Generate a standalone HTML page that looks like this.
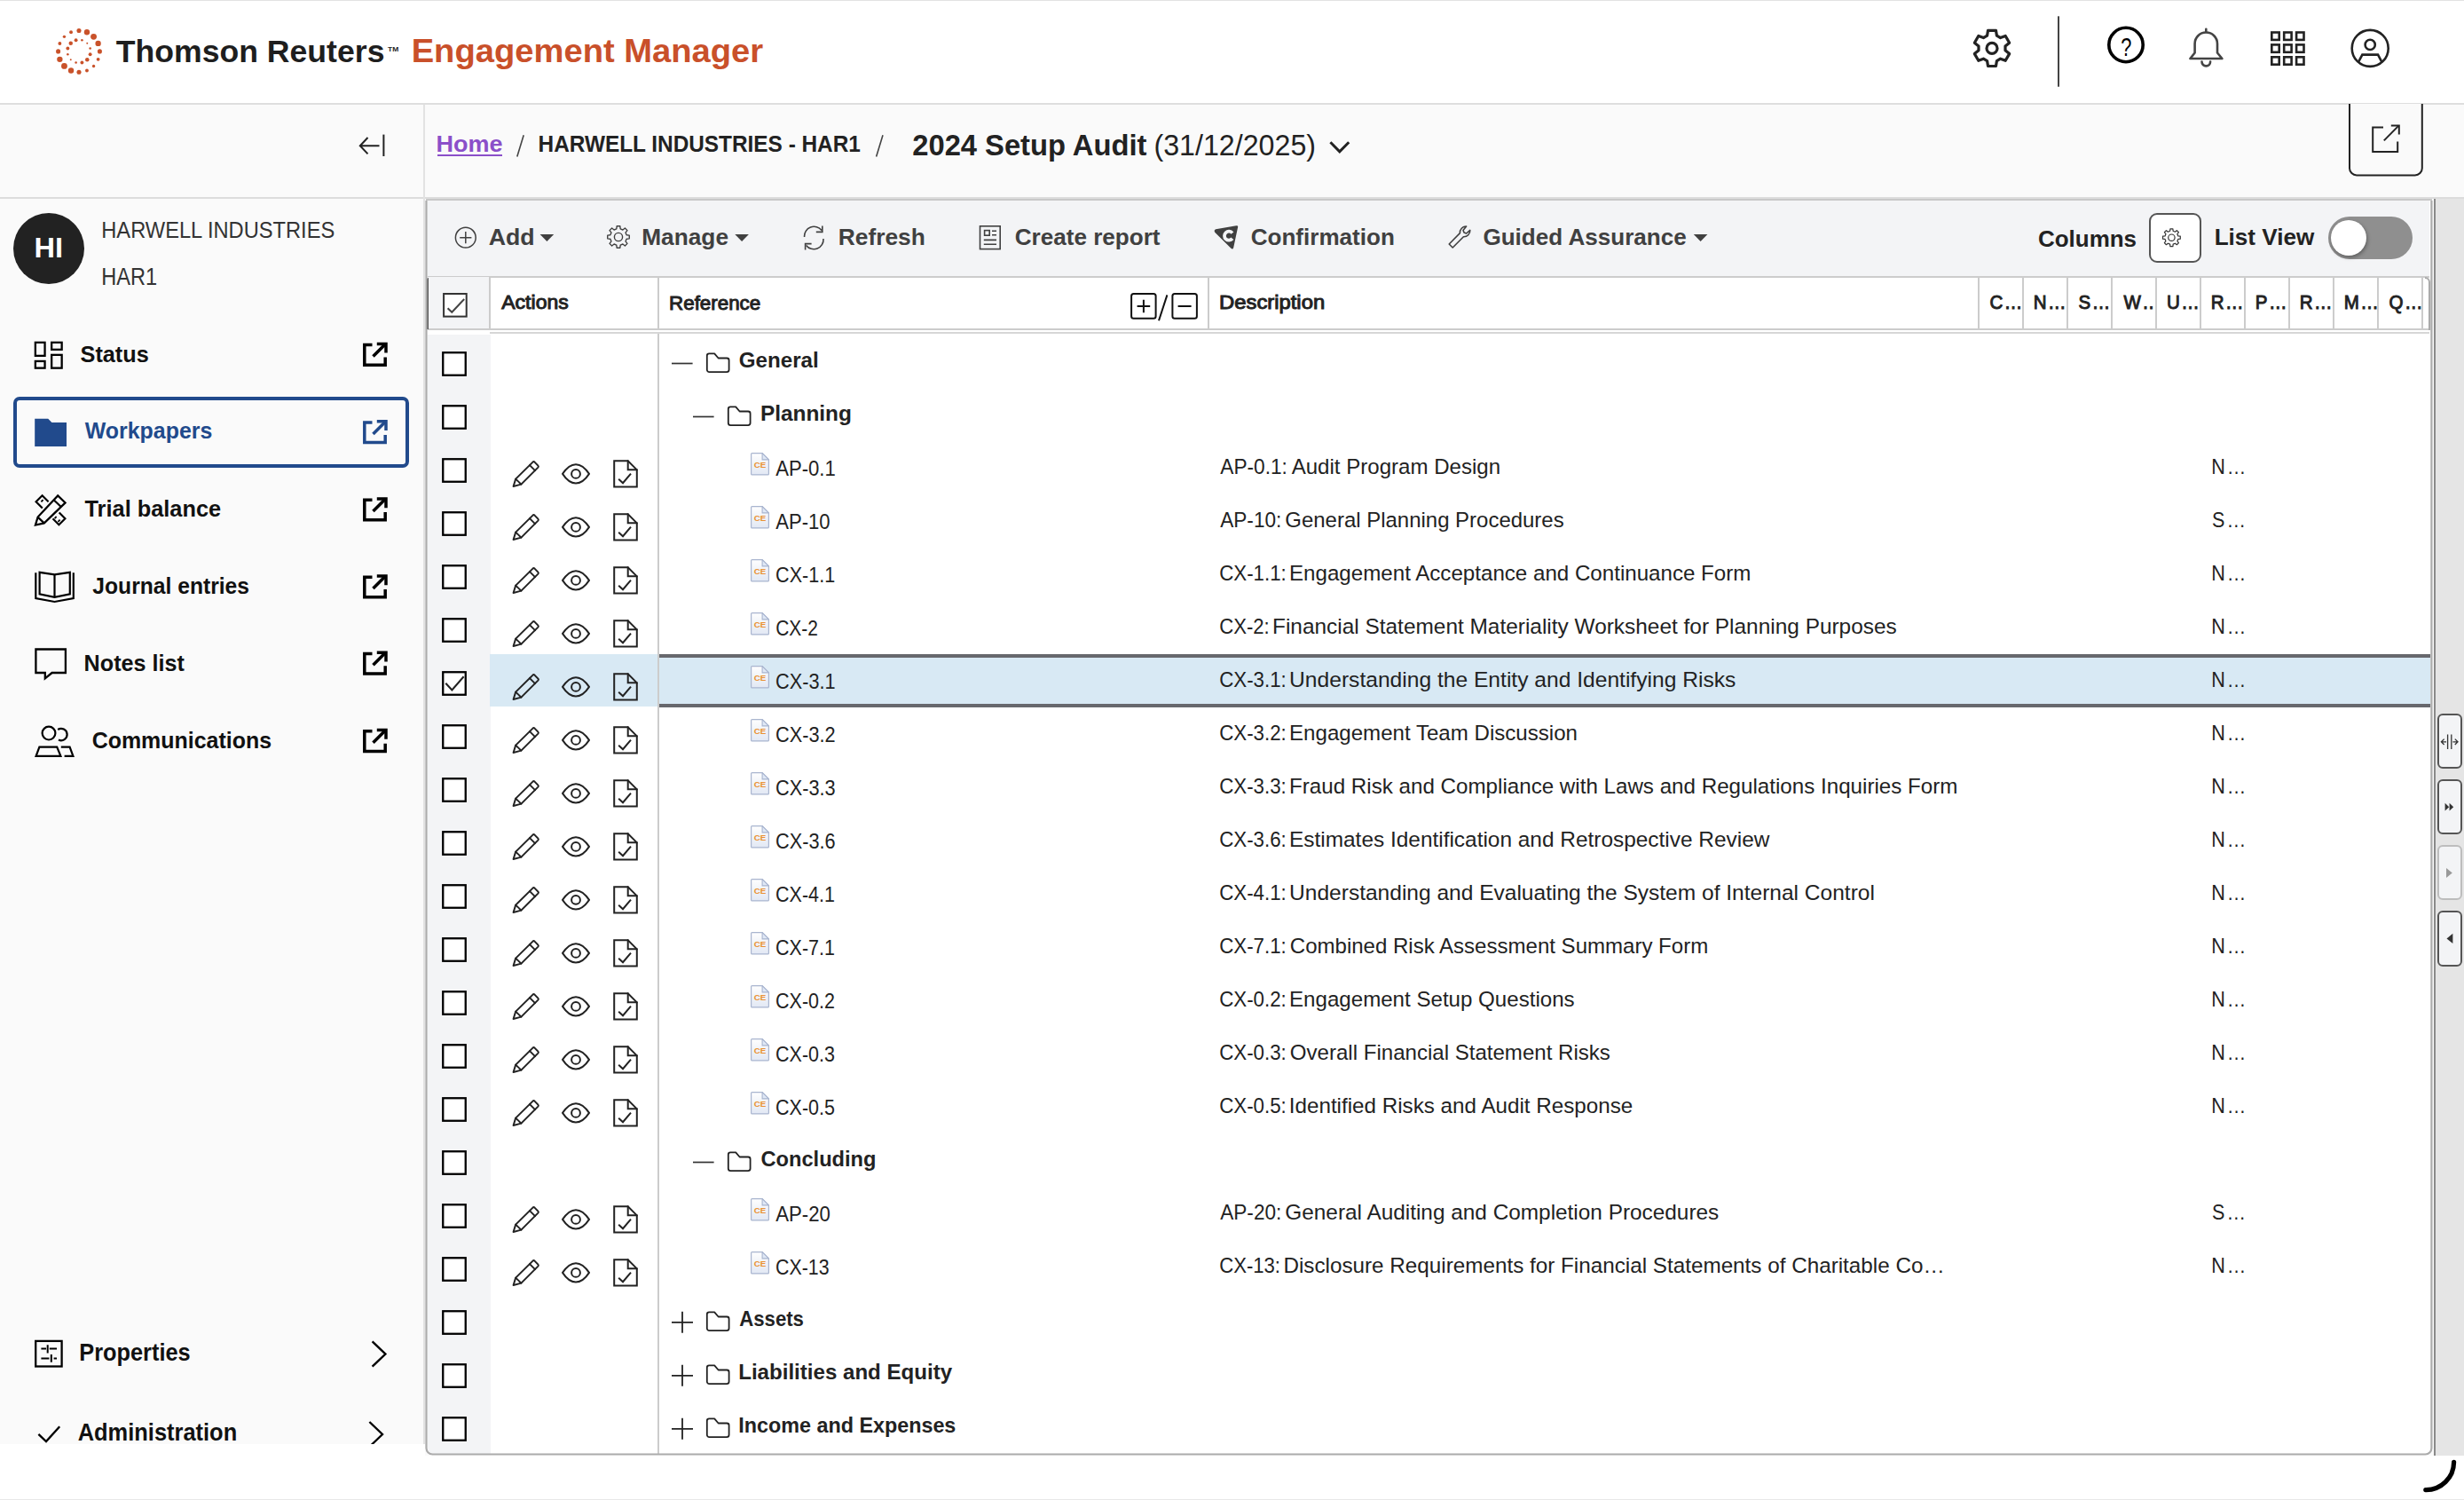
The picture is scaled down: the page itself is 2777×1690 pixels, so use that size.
<!DOCTYPE html>
<html><head><meta charset="utf-8"><title>Engagement Manager</title><style>
html,body{margin:0;padding:0}
body{width:2777px;height:1690px;overflow:hidden;background:#fff;position:relative;font-family:"Liberation Sans",sans-serif;color:#222}
.t{position:absolute;white-space:nowrap;line-height:1;transform-origin:0 0}
.bx{position:absolute;box-sizing:content-box}
.hdr{position:absolute;left:0;top:0;width:2777px;height:115px;background:#fff;border-top:1px solid #e2e2e2;border-bottom:2px solid #dedede}
.sub{position:absolute;left:0;top:118px;width:2777px;height:104px;background:#fafafa;border-bottom:2px solid #dcdcdc}
.side{position:absolute;left:0;top:224px;width:477px;height:1403px;border-right:2px solid #e2e2e2}
.sdiv{position:absolute;left:477px;top:118px;width:2px;height:106px;background:#e2e2e2}
.side{background:#fafafa}
.sub{z-index:0}
.strip{position:absolute;left:2743px;top:224px;width:34px;height:1416px;background:#e5e5e5;border-left:2px solid #8a8a8a;box-sizing:border-box}
.panel{position:absolute;left:480px;top:224px;width:2261px;height:1415px;border-top:2px solid #c8c8c8;box-sizing:border-box;border-radius:0 0 8px 8px;background:#fff}
.tbar{position:absolute;left:482px;top:226px;width:2256px;height:85px;background:#f3f4f6;border-bottom:2px solid #ccc}
.thead{position:absolute;left:482px;top:370px;width:2256px;height:2px;background:#ccc}
.thead:after{content:"";position:absolute;left:70px;top:4px;width:2186px;height:2px;background:#d6d6d6}
svg.ov{position:absolute;left:0;top:0}
</style></head><body>
<div class="bx" style="left:0;top:224px;width:2777px;height:1416px;background:#fafafa"></div>
<div class="hdr"></div>
<span class="t" style="left:130px;top:41px;font-size:35.76px;transform:translateX(0.70px) scaleX(0.9962);font-weight:bold;color:#1e1e1e;">Thomson Reuters</span>
<span class="t" style="left:437px;top:52px;font-size:7.56px;transform:translateX(0.10px) scaleX(1.1245);font-weight:bold;color:#1e1e1e;">TM</span>
<span class="t" style="left:463px;top:40px;font-size:36.05px;transform:translateX(0.65px) scaleX(1.0586);font-weight:bold;color:#c9502a;">Engagement Manager</span>
<div class="sub"></div>
<span class="t" style="left:491px;top:150px;font-size:25.58px;transform:translateX(0.39px) scaleX(1.0556);font-weight:bold;color:#8b4fc9;">Home</span>
<div class="bx" style="left:493px;top:174px;width:72.5px;height:2px;background:#8b4fc9"></div>
<span class="t" style="left:606px;top:150px;font-size:25.58px;transform:translateX(0.57px) scaleX(0.9527);font-weight:bold;">HARWELL INDUSTRIES - HAR1</span>
<span class="t" style="left:1028px;top:148px;font-size:32.7px;transform:translateX(0.27px) scaleX(1.0006);font-weight:bold;">2024 Setup Audit</span>
<span class="t" style="left:1300px;top:148px;font-size:32.7px;transform:translateX(0.50px) scaleX(0.9845);">(31/12/2025)</span>
<div class="side"></div><div class="sdiv"></div>
<div class="bx" style="left:15px;top:240px;width:80px;height:80px;border-radius:40px;background:#222"></div>
<span class="t" style="left:38px;top:264px;font-size:30.52px;transform:translateX(0.62px) scaleX(1.0662);font-weight:bold;color:#fff;">HI</span>
<span class="t" style="left:114px;top:246px;font-size:26.16px;transform:translateX(0.26px) scaleX(0.9048);color:#333;">HARWELL INDUSTRIES</span>
<span class="t" style="left:114px;top:299px;font-size:26.74px;transform:translateX(0.27px) scaleX(0.8816);color:#333;">HAR1</span>
<span class="t" style="left:90px;top:386px;font-size:26.6px;transform:translateX(0.57px) scaleX(0.9493);font-weight:bold;color:#111;">Status</span>
<div class="bx" style="left:15px;top:446.7px;width:438px;height:72px;border:4px solid #214a8c;border-radius:7px"></div>
<span class="t" style="left:95px;top:472px;font-size:26.16px;transform:translateX(0.78px) scaleX(0.9525);font-weight:bold;color:#214a8c;">Workpapers</span>
<span class="t" style="left:95px;top:560px;font-size:26.6px;transform:translateX(0.52px) scaleX(0.9536);font-weight:bold;color:#111;">Trial balance</span>
<span class="t" style="left:104px;top:647px;font-size:26.6px;transform:translateX(0.33px) scaleX(0.9267);font-weight:bold;color:#111;">Journal entries</span>
<span class="t" style="left:94px;top:734px;font-size:26.6px;transform:translateX(0.62px) scaleX(0.9456);font-weight:bold;color:#111;">Notes list</span>
<span class="t" style="left:103px;top:821px;font-size:26.6px;transform:translateX(0.68px) scaleX(0.9379);font-weight:bold;color:#111;">Communications</span>
<span class="t" style="left:89px;top:1511px;font-size:26.89px;transform:translateX(0.30px) scaleX(0.9428);font-weight:bold;color:#111;">Properties</span>
<span class="t" style="left:87px;top:1601px;font-size:26.74px;transform:translateX(0.67px) scaleX(0.9516);font-weight:bold;color:#111;">Administration</span>
<div class="bx" style="left:0;top:1627px;width:479px;height:63px;background:#fff"></div>
<div class="strip"></div>
<div class="panel"></div>
<div class="tbar"></div>
<span class="t" style="left:550px;top:255px;font-size:25.8px;transform:translateX(0.63px) scaleX(1.0353);font-weight:bold;color:#404040;">Add</span>
<span class="t" style="left:723px;top:255px;font-size:25.8px;transform:translateX(0.24px) scaleX(1.0178);font-weight:bold;color:#404040;">Manage</span>
<span class="t" style="left:944px;top:255px;font-size:25.8px;transform:translateX(0.84px) scaleX(1.0201);font-weight:bold;color:#404040;">Refresh</span>
<span class="t" style="left:1143px;top:255px;font-size:25.8px;transform:translateX(0.73px) scaleX(1.0110);font-weight:bold;color:#404040;">Create report</span>
<span class="t" style="left:1409px;top:255px;font-size:25.8px;transform:translateX(0.73px) scaleX(1.0099);font-weight:bold;color:#404040;">Confirmation</span>
<span class="t" style="left:1671px;top:255px;font-size:25.8px;transform:translateX(0.43px) scaleX(1.0100);font-weight:bold;color:#404040;">Guided Assurance</span>
<span class="t" style="left:2296px;top:257px;font-size:25.8px;transform:translateX(0.93px) scaleX(1.0070);font-weight:bold;">Columns</span>
<div class="bx" style="left:2422px;top:240px;width:55px;height:52px;border:2px solid #555;border-radius:9px;background:#fff"></div>
<span class="t" style="left:2495px;top:255px;font-size:25.8px;transform:translateX(0.65px) scaleX(1.0120);font-weight:bold;">List View</span>
<div class="bx" style="left:2623.5px;top:244px;width:95.5px;height:48px;border-radius:24px;background:#8f8f8f"></div>
<div class="bx" style="left:2627px;top:248px;width:40px;height:40px;border-radius:20px;background:#fff;box-shadow:1px 2px 4px rgba(0,0,0,.35)"></div>
<div class="thead"></div>
<div class="bx" style="left:482px;top:312px;width:69px;height:58px;background:#f3f4f6"></div>
<div class="bx" style="left:551px;top:312px;width:2px;height:58px;background:#ccc"></div>
<div class="bx" style="left:741px;top:312px;width:2px;height:58px;background:#ccc"></div>
<div class="bx" style="left:1361px;top:312px;width:2px;height:58px;background:#ccc"></div>
<div class="bx" style="left:2229px;top:312px;width:2px;height:58px;background:#ccc"></div>
<div class="bx" style="left:2279px;top:312px;width:2px;height:58px;background:#ccc"></div>
<div class="bx" style="left:2329px;top:312px;width:2px;height:58px;background:#ccc"></div>
<div class="bx" style="left:2379px;top:312px;width:2px;height:58px;background:#ccc"></div>
<div class="bx" style="left:2429px;top:312px;width:2px;height:58px;background:#ccc"></div>
<div class="bx" style="left:2479px;top:312px;width:2px;height:58px;background:#ccc"></div>
<div class="bx" style="left:2529px;top:312px;width:2px;height:58px;background:#ccc"></div>
<div class="bx" style="left:2579px;top:312px;width:2px;height:58px;background:#ccc"></div>
<div class="bx" style="left:2629px;top:312px;width:2px;height:58px;background:#ccc"></div>
<div class="bx" style="left:2679px;top:312px;width:2px;height:58px;background:#ccc"></div>
<div class="bx" style="left:2729px;top:312px;width:2px;height:58px;background:#ccc"></div>
<div class="bx" style="left:480.5px;top:313px;width:2.2px;height:58px;background:#5a5a5a;border-radius:3px 0 0 0"></div>
<div class="bx" style="left:2733px;top:312px;width:6px;height:60px;border:2px solid #aaa;border-left:0;border-bottom:0;border-radius:0 6px 0 0;box-sizing:border-box"></div>
<span class="t" style="left:565px;top:329px;font-size:22.67px;transform:translateX(0.26px) scaleX(1.0159);-webkit-text-stroke:1px #222;">Actions</span>
<span class="t" style="left:754px;top:330px;font-size:22.67px;transform:translateX(0.07px) scaleX(0.9866);-webkit-text-stroke:1px #222;">Reference</span>
<span class="t" style="left:1374px;top:329px;font-size:22.67px;transform:translateX(0.05px) scaleX(1.0509);-webkit-text-stroke:1px #222;">Description</span>
<div class="bx" style="left:2242px;top:322px;width:36.5px;height:40px;overflow:hidden"><span class="t" style="left:0px;top:7px;font-size:22.67px;transform:translateX(0.46px) scaleX(0.9050);letter-spacing:1.6px;-webkit-text-stroke:1px #222;">C…</span></div>
<div class="bx" style="left:2292px;top:322px;width:36.5px;height:40px;overflow:hidden"><span class="t" style="left:-1px;top:7px;font-size:22.67px;transform:translateX(0.82px) scaleX(0.9050);letter-spacing:1.6px;-webkit-text-stroke:1px #222;">N…</span></div>
<div class="bx" style="left:2342px;top:322px;width:36.5px;height:40px;overflow:hidden"><span class="t" style="left:0px;top:7px;font-size:22.67px;transform:translateX(0.57px) scaleX(0.9050);letter-spacing:1.6px;-webkit-text-stroke:1px #222;">S…</span></div>
<div class="bx" style="left:2392px;top:322px;width:36.5px;height:40px;overflow:hidden"><span class="t" style="left:1px;top:7px;font-size:22.67px;transform:translateX(0.41px) scaleX(0.9050);letter-spacing:1.6px;-webkit-text-stroke:1px #222;">W…</span></div>
<div class="bx" style="left:2442px;top:322px;width:36.5px;height:40px;overflow:hidden"><span class="t" style="left:-1px;top:7px;font-size:22.67px;transform:translateX(0.92px) scaleX(0.9050);letter-spacing:1.6px;-webkit-text-stroke:1px #222;">U…</span></div>
<div class="bx" style="left:2492px;top:322px;width:36.5px;height:40px;overflow:hidden"><span class="t" style="left:-1px;top:7px;font-size:22.67px;transform:translateX(0.82px) scaleX(0.9050);letter-spacing:1.6px;-webkit-text-stroke:1px #222;">R…</span></div>
<div class="bx" style="left:2542px;top:322px;width:36.5px;height:40px;overflow:hidden"><span class="t" style="left:-1px;top:7px;font-size:22.67px;transform:translateX(0.82px) scaleX(0.9050);letter-spacing:1.6px;-webkit-text-stroke:1px #222;">P…</span></div>
<div class="bx" style="left:2592px;top:322px;width:36.5px;height:40px;overflow:hidden"><span class="t" style="left:-1px;top:7px;font-size:22.67px;transform:translateX(0.82px) scaleX(0.9050);letter-spacing:1.6px;-webkit-text-stroke:1px #222;">R…</span></div>
<div class="bx" style="left:2642px;top:322px;width:36.5px;height:40px;overflow:hidden"><span class="t" style="left:-1px;top:7px;font-size:22.67px;transform:translateX(0.82px) scaleX(0.9050);letter-spacing:1.6px;-webkit-text-stroke:1px #222;">M…</span></div>
<div class="bx" style="left:2692px;top:322px;width:36.5px;height:40px;overflow:hidden"><span class="t" style="left:0px;top:7px;font-size:22.67px;transform:translateX(0.53px) scaleX(0.9050);letter-spacing:1.6px;-webkit-text-stroke:1px #222;">Q…</span></div>
<div class="bx" style="left:481.5px;top:376.5px;width:71.4px;height:1261px;background:#f3f4f6;border-radius:0 0 0 7px"></div>
<div class="bx" style="left:741px;top:376px;width:2px;height:1262px;background:#ccc"></div>
<div class="bx" style="left:552px;top:737px;width:189px;height:59px;background:#d8e9f4"></div>
<div class="bx" style="left:743px;top:736.5px;width:1996px;height:52px;background:#d8e9f4;border-top:4px solid #67686d;border-bottom:4px solid #67686d"></div>
<span class="t" style="left:832px;top:394px;font-size:23.84px;transform:translateX(0.81px) scaleX(1.0130);font-weight:bold;">General</span>
<span class="t" style="left:856px;top:454px;font-size:23.84px;transform:translateX(0.89px) scaleX(1.0242);font-weight:bold;">Planning</span>
<span class="t" style="left:874px;top:517px;font-size:23.69px;transform:translateX(0.26px) scaleX(0.9323);">AP-0.1</span>
<span class="t" style="left:1375px;top:514px;font-size:23.84px;transform:translateX(0.26px) scaleX(0.9515);">AP-0.1:</span>
<span class="t" style="left:1455px;top:514px;font-size:23.84px;transform:translateX(0.65px) scaleX(1.0099);">Audit Program Design</span>
<div class="bx" style="left:2490px;top:507px;width:40.5px;height:40px;overflow:hidden"><span class="t" style="left:2px;top:7px;font-size:23.84px;transform:translateX(0.13px) scaleX(0.9050);letter-spacing:2.3px;">N…</span></div>
<span class="t" style="left:874px;top:577px;font-size:23.69px;transform:translateX(0.26px) scaleX(0.9311);">AP-10</span>
<span class="t" style="left:1375px;top:574px;font-size:23.84px;transform:translateX(0.26px) scaleX(0.9471);">AP-10:</span>
<span class="t" style="left:1448px;top:574px;font-size:23.84px;transform:translateX(0.29px) scaleX(1.0056);">General Planning Procedures</span>
<div class="bx" style="left:2490px;top:567px;width:40.5px;height:40px;overflow:hidden"><span class="t" style="left:2px;top:7px;font-size:23.84px;transform:translateX(0.92px) scaleX(0.9050);letter-spacing:2.3px;">S…</span></div>
<span class="t" style="left:874px;top:637px;font-size:23.69px;transform:translateX(0.11px) scaleX(0.9093);">CX-1.1</span>
<span class="t" style="left:1374px;top:634px;font-size:23.84px;transform:translateX(0.17px) scaleX(0.9355);">CX-1.1:</span>
<span class="t" style="left:1453px;top:634px;font-size:23.84px;transform:translateX(0.02px) scaleX(1.0125);">Engagement Acceptance and Continuance Form</span>
<div class="bx" style="left:2490px;top:627px;width:40.5px;height:40px;overflow:hidden"><span class="t" style="left:2px;top:7px;font-size:23.84px;transform:translateX(0.13px) scaleX(0.9050);letter-spacing:2.3px;">N…</span></div>
<span class="t" style="left:874px;top:697px;font-size:23.69px;transform:translateX(0.14px) scaleX(0.8822);">CX-2</span>
<span class="t" style="left:1374px;top:694px;font-size:23.84px;transform:translateX(0.18px) scaleX(0.9281);">CX-2:</span>
<span class="t" style="left:1433px;top:694px;font-size:23.84px;transform:translateX(1.00px) scaleX(1.0245);">Financial Statement Materiality Worksheet for Planning Purposes</span>
<div class="bx" style="left:2490px;top:687px;width:40.5px;height:40px;overflow:hidden"><span class="t" style="left:2px;top:7px;font-size:23.84px;transform:translateX(0.13px) scaleX(0.9050);letter-spacing:2.3px;">N…</span></div>
<span class="t" style="left:874px;top:757px;font-size:23.69px;transform:translateX(0.10px) scaleX(0.9163);">CX-3.1</span>
<span class="t" style="left:1374px;top:754px;font-size:23.84px;transform:translateX(0.17px) scaleX(0.9355);">CX-3.1:</span>
<span class="t" style="left:1453px;top:754px;font-size:23.84px;transform:translateX(0.10px) scaleX(1.0323);">Understanding the Entity and Identifying Risks</span>
<div class="bx" style="left:2490px;top:747px;width:40.5px;height:40px;overflow:hidden"><span class="t" style="left:2px;top:7px;font-size:23.84px;transform:translateX(0.13px) scaleX(0.9050);letter-spacing:2.3px;">N…</span></div>
<span class="t" style="left:874px;top:817px;font-size:23.69px;transform:translateX(0.10px) scaleX(0.9167);">CX-3.2</span>
<span class="t" style="left:1374px;top:814px;font-size:23.84px;transform:translateX(0.17px) scaleX(0.9355);">CX-3.2:</span>
<span class="t" style="left:1453px;top:814px;font-size:23.84px;transform:translateX(0.02px) scaleX(1.0110);">Engagement Team Discussion</span>
<div class="bx" style="left:2490px;top:807px;width:40.5px;height:40px;overflow:hidden"><span class="t" style="left:2px;top:7px;font-size:23.84px;transform:translateX(0.13px) scaleX(0.9050);letter-spacing:2.3px;">N…</span></div>
<span class="t" style="left:874px;top:877px;font-size:23.69px;transform:translateX(0.10px) scaleX(0.9148);">CX-3.3</span>
<span class="t" style="left:1374px;top:874px;font-size:23.84px;transform:translateX(0.17px) scaleX(0.9355);">CX-3.3:</span>
<span class="t" style="left:1453px;top:874px;font-size:23.84px;transform:translateX(0.02px) scaleX(1.0140);">Fraud Risk and Compliance with Laws and Regulations Inquiries Form</span>
<div class="bx" style="left:2490px;top:867px;width:40.5px;height:40px;overflow:hidden"><span class="t" style="left:2px;top:7px;font-size:23.84px;transform:translateX(0.13px) scaleX(0.9050);letter-spacing:2.3px;">N…</span></div>
<span class="t" style="left:874px;top:937px;font-size:23.69px;transform:translateX(0.10px) scaleX(0.9148);">CX-3.6</span>
<span class="t" style="left:1374px;top:934px;font-size:23.84px;transform:translateX(0.17px) scaleX(0.9355);">CX-3.6:</span>
<span class="t" style="left:1452px;top:934px;font-size:23.84px;transform:translateX(1.00px) scaleX(1.0244);">Estimates Identification and Retrospective Review</span>
<div class="bx" style="left:2490px;top:927px;width:40.5px;height:40px;overflow:hidden"><span class="t" style="left:2px;top:7px;font-size:23.84px;transform:translateX(0.13px) scaleX(0.9050);letter-spacing:2.3px;">N…</span></div>
<span class="t" style="left:874px;top:997px;font-size:23.69px;transform:translateX(0.11px) scaleX(0.9050);">CX-4.1</span>
<span class="t" style="left:1374px;top:994px;font-size:23.84px;transform:translateX(0.17px) scaleX(0.9355);">CX-4.1:</span>
<span class="t" style="left:1453px;top:994px;font-size:23.84px;transform:translateX(0.11px) scaleX(1.0292);">Understanding and Evaluating the System of Internal Control</span>
<div class="bx" style="left:2490px;top:987px;width:40.5px;height:40px;overflow:hidden"><span class="t" style="left:2px;top:7px;font-size:23.84px;transform:translateX(0.13px) scaleX(0.9050);letter-spacing:2.3px;">N…</span></div>
<span class="t" style="left:874px;top:1057px;font-size:23.69px;transform:translateX(0.11px) scaleX(0.9050);">CX-7.1</span>
<span class="t" style="left:1374px;top:1054px;font-size:23.84px;transform:translateX(0.17px) scaleX(0.9355);">CX-7.1:</span>
<span class="t" style="left:1453px;top:1054px;font-size:23.84px;transform:translateX(0.78px) scaleX(1.0085);">Combined Risk Assessment Summary Form</span>
<div class="bx" style="left:2490px;top:1047px;width:40.5px;height:40px;overflow:hidden"><span class="t" style="left:2px;top:7px;font-size:23.84px;transform:translateX(0.13px) scaleX(0.9050);letter-spacing:2.3px;">N…</span></div>
<span class="t" style="left:874px;top:1117px;font-size:23.69px;transform:translateX(0.11px) scaleX(0.9050);">CX-0.2</span>
<span class="t" style="left:1374px;top:1114px;font-size:23.84px;transform:translateX(0.17px) scaleX(0.9355);">CX-0.2:</span>
<span class="t" style="left:1453px;top:1114px;font-size:23.84px;transform:translateX(0.02px) scaleX(1.0117);">Engagement Setup Questions</span>
<div class="bx" style="left:2490px;top:1107px;width:40.5px;height:40px;overflow:hidden"><span class="t" style="left:2px;top:7px;font-size:23.84px;transform:translateX(0.13px) scaleX(0.9050);letter-spacing:2.3px;">N…</span></div>
<span class="t" style="left:874px;top:1177px;font-size:23.69px;transform:translateX(0.11px) scaleX(0.9050);">CX-0.3</span>
<span class="t" style="left:1374px;top:1174px;font-size:23.84px;transform:translateX(0.17px) scaleX(0.9355);">CX-0.3:</span>
<span class="t" style="left:1453px;top:1174px;font-size:23.84px;transform:translateX(0.86px) scaleX(1.0096);">Overall Financial Statement Risks</span>
<div class="bx" style="left:2490px;top:1167px;width:40.5px;height:40px;overflow:hidden"><span class="t" style="left:2px;top:7px;font-size:23.84px;transform:translateX(0.13px) scaleX(0.9050);letter-spacing:2.3px;">N…</span></div>
<span class="t" style="left:874px;top:1237px;font-size:23.69px;transform:translateX(0.11px) scaleX(0.9050);">CX-0.5</span>
<span class="t" style="left:1374px;top:1234px;font-size:23.84px;transform:translateX(0.17px) scaleX(0.9355);">CX-0.5:</span>
<span class="t" style="left:1452px;top:1234px;font-size:23.84px;transform:translateX(0.77px) scaleX(1.0158);">Identified Risks and Audit Response</span>
<div class="bx" style="left:2490px;top:1227px;width:40.5px;height:40px;overflow:hidden"><span class="t" style="left:2px;top:7px;font-size:23.84px;transform:translateX(0.13px) scaleX(0.9050);letter-spacing:2.3px;">N…</span></div>
<span class="t" style="left:857px;top:1294px;font-size:23.84px;transform:translateX(0.55px) scaleX(0.9915);font-weight:bold;">Concluding</span>
<span class="t" style="left:874px;top:1357px;font-size:23.69px;transform:translateX(0.26px) scaleX(0.9357);">AP-20</span>
<span class="t" style="left:1375px;top:1354px;font-size:23.84px;transform:translateX(0.26px) scaleX(0.9471);">AP-20:</span>
<span class="t" style="left:1448px;top:1354px;font-size:23.84px;transform:translateX(0.27px) scaleX(1.0226);">General Auditing and Completion Procedures</span>
<div class="bx" style="left:2490px;top:1347px;width:40.5px;height:40px;overflow:hidden"><span class="t" style="left:2px;top:7px;font-size:23.84px;transform:translateX(0.92px) scaleX(0.9050);letter-spacing:2.3px;">S…</span></div>
<span class="t" style="left:874px;top:1417px;font-size:23.69px;transform:translateX(0.12px) scaleX(0.8997);">CX-13</span>
<span class="t" style="left:1374px;top:1414px;font-size:23.84px;transform:translateX(0.18px) scaleX(0.9282);">CX-13:</span>
<span class="t" style="left:1446px;top:1414px;font-size:23.84px;transform:translateX(0.41px) scaleX(1.0176);">Disclosure Requirements for Financial Statements of Charitable Co…</span>
<div class="bx" style="left:2490px;top:1407px;width:40.5px;height:40px;overflow:hidden"><span class="t" style="left:2px;top:7px;font-size:23.84px;transform:translateX(0.13px) scaleX(0.9050);letter-spacing:2.3px;">N…</span></div>
<span class="t" style="left:833px;top:1474px;font-size:23.84px;transform:translateX(0.25px) scaleX(0.9297);font-weight:bold;">Assets</span>
<span class="t" style="left:832px;top:1534px;font-size:23.84px;transform:translateX(0.19px) scaleX(1.0110);font-weight:bold;">Liabilities and Equity</span>
<span class="t" style="left:832px;top:1594px;font-size:23.84px;transform:translateX(0.24px) scaleX(0.9793);font-weight:bold;">Income and Expenses</span>
<div class="bx" style="left:2747.3px;top:803.6px;width:23.4px;height:58.4px;border:2px solid #555;border-radius:6px;background:#f3f4f6"></div>
<div class="bx" style="left:2747.3px;top:877.7px;width:23.4px;height:58.4px;border:2px solid #555;border-radius:6px;background:#f3f4f6"></div>
<div class="bx" style="left:2747.3px;top:952px;width:23.4px;height:58.4px;border:2px solid #bdbdbd;border-radius:6px;background:#f3f4f6"></div>
<div class="bx" style="left:2747.3px;top:1026.2px;width:23.4px;height:58.4px;border:2px solid #555;border-radius:6px;background:#f3f4f6"></div>
<svg class="ov" width="2777" height="1690" viewBox="0 0 2777 1690">
<defs><linearGradient id="cg" x1="0" y1="0" x2="0" y2="1"><stop offset="0" stop-color="#fefefe"/><stop offset="1" stop-color="#e2e8f4"/></linearGradient></defs>
<g fill="#c9522a"><circle cx="89.00" cy="34.50" r="2.55"/><circle cx="97.95" cy="36.28" r="3.17"/><circle cx="105.55" cy="41.35" r="3.42"/><circle cx="110.62" cy="48.95" r="3.17"/><circle cx="112.40" cy="57.90" r="2.55"/><circle cx="110.62" cy="66.85" r="1.93"/><circle cx="105.55" cy="74.45" r="1.68"/><circle cx="97.95" cy="79.52" r="1.93"/><circle cx="89.00" cy="81.30" r="2.55"/><circle cx="80.05" cy="79.52" r="3.17"/><circle cx="72.45" cy="74.45" r="3.42"/><circle cx="67.38" cy="66.85" r="3.17"/><circle cx="65.60" cy="57.90" r="2.55"/><circle cx="67.38" cy="48.95" r="1.93"/><circle cx="72.45" cy="41.35" r="1.68"/><circle cx="80.05" cy="36.28" r="1.93"/><circle cx="85.61" cy="45.25" r="1.94"/><circle cx="92.39" cy="45.25" r="1.31"/><circle cx="98.26" cy="48.64" r="0.99"/><circle cx="101.65" cy="54.51" r="1.31"/><circle cx="101.65" cy="61.29" r="1.94"/><circle cx="98.26" cy="67.16" r="2.25"/><circle cx="92.39" cy="70.55" r="1.94"/><circle cx="85.61" cy="70.55" r="1.30"/><circle cx="79.74" cy="67.16" r="0.99"/><circle cx="76.35" cy="61.29" r="1.30"/><circle cx="76.35" cy="54.51" r="1.94"/><circle cx="79.74" cy="48.64" r="2.25"/></g>
<path d="M2239.55 40.21 L2240.54 34.29 L2249.46 34.29 L2250.45 40.21 L2254.57 42.59 L2260.19 40.48 L2264.65 48.21 L2260.01 52.02 L2260.01 56.78 L2264.65 60.59 L2260.19 68.32 L2254.57 66.21 L2250.45 68.59 L2249.46 74.51 L2240.54 74.51 L2239.55 68.59 L2235.43 66.21 L2229.81 68.32 L2225.35 60.59 L2229.99 56.78 L2229.99 52.02 L2225.35 48.21 L2229.81 40.48 L2235.43 42.59 Z" fill="none" stroke="#222" stroke-width="3.2" stroke-linejoin="round"/><circle cx="2245" cy="54.4" r="6" fill="none" stroke="#222" stroke-width="3.2"/>
<rect x="2319" y="18.3" width="2" height="79.4" fill="#444"/>
<circle cx="2396" cy="50.5" r="19.2" fill="none" stroke="#000" stroke-width="3.6"/><text x="0" y="0" transform="translate(2396.3 62.9) scale(0.74 1)" font-family="Liberation Sans" font-size="29.5" fill="#000" text-anchor="middle">?</text>
<g fill="none" stroke="#444" stroke-width="2.6" stroke-linejoin="round" stroke-linecap="round"><path d="M2468.4 66 L2473.6 59.5 V49.2 a12.7 12.7 0 0 1 25.4 0 V59.5 L2504.4 66 Z"/><path d="M2486.3 36 V32.8"/><path d="M2481.5 69.6 a4.8 4.8 0 0 0 9.6 0"/></g>
<g fill="none" stroke="#222" stroke-width="2.6"><rect x="2560.3" y="36.5" width="8.4" height="8.4"/><rect x="2574.2" y="36.5" width="8.4" height="8.4"/><rect x="2588.1" y="36.5" width="8.4" height="8.4"/><rect x="2560.3" y="50.4" width="8.4" height="8.4"/><rect x="2574.2" y="50.4" width="8.4" height="8.4"/><rect x="2588.1" y="50.4" width="8.4" height="8.4"/><rect x="2560.3" y="64.3" width="8.4" height="8.4"/><rect x="2574.2" y="64.3" width="8.4" height="8.4"/><rect x="2588.1" y="64.3" width="8.4" height="8.4"/></g>
<g fill="none" stroke="#222" stroke-width="2.6"><circle cx="2671.2" cy="54.4" r="20.5"/><circle cx="2671.2" cy="50.4" r="5.6"/><path d="M2657.6 70.6 L2662.4 61.6 H2680 L2684.8 70.6"/></g>
<g fill="none" stroke="#222" stroke-width="2"><path d="M427.5 164.2 H406 M414.5 155 L405.8 164.2 L414.5 173.4"/><path d="M432.4 151.6 V176"/></g>
<path d="M582.8 176.5 L590.2 152.3 M987.6 176.5 L995 152.3" stroke="#444" stroke-width="1.6" fill="none"/>
<path d="M1499.4 160.2 L1509.8 170.8 L1520.2 160.2" fill="none" stroke="#222" stroke-width="3"/>
<path d="M2648 117 V189.4 a8 8 0 0 0 8 8 H2721.8 a8 8 0 0 0 8 -8 V117" fill="#fafafa" stroke="#222" stroke-width="2"/><g fill="none" stroke="#222" stroke-width="2"><path d="M2686 143.4 H2674.2 V170.9 H2702.2 V159.6"/><path d="M2686.8 158.4 L2703.6 141.4"/><path d="M2694.8 141.6 H2703.8 V151.4"/></g>
<g fill="none" stroke="#000" stroke-width="2.3"><rect x="39.85" y="385.85" width="10.7" height="15"/><rect x="39.85" y="406.95" width="10.7" height="7.7"/><rect x="58.15" y="385.85" width="11.5" height="8"/><rect x="58.15" y="399.85" width="11.5" height="14.8"/></g>
<path d="M39.2 471.7 H54.2 L58.4 475.9 H75 V503 H39.2 Z" fill="#214a8c"/>
<g fill="#fafafa" stroke="#000" stroke-width="2.2" stroke-linejoin="miter"><path d="M40.6 565.2 L47.6 558.2 L73.4 584.2 L66.4 591.2 Z"/><path d="M46.4 565.4 L48.6 563.2 M67.6 585.6 L65.4 587.8 M63.6 582 L61.6 584" fill="none" stroke-width="1.8"/><path d="M39.9 591.6 L42.6 582.6 L64.8 558.6 L73.6 566.6 L49.8 589.6 Z" stroke="#fafafa" stroke-width="6"/><path d="M39.9 591.6 L42.6 582.6 L65.2 558.4 L73.6 566.4 L49.8 589.4 Z"/><path d="M42.6 582.6 L49.8 589.4 M60.6 563.2 L68.8 571" fill="none"/></g>
<g fill="none" stroke="#000" stroke-width="2.2" stroke-linejoin="miter"><path d="M40.3 645.3 V674.2 L61.5 678 L82.8 674.2 V645.3"/><path d="M44.6 644.8 V669.4 L61.5 672.8 L78.8 669.4 V644.8 L61.5 647.4 Z"/><path d="M61.5 647.4 V672.8"/></g>
<path d="M40.4 731.5 H73.9 V758 H58.6 L50.8 764.4 V758 H40.4 Z" fill="none" stroke="#000" stroke-width="2.3"/>
<g fill="none" stroke="#000" stroke-width="2.2"><circle cx="55" cy="826.1" r="7.4"/><path d="M65.2 822.0 A6.7 6.7 0 1 1 66.0 833.6"/><path d="M44.4 841.7 H64.2 L68.4 851.8 H40.6 Z"/><path d="M68.8 841.7 H78.6 L82.4 851.8 H72.6"/></g>
<g transform="translate(0.0 0.0)" fill="none" stroke="#000" stroke-width="3.5"><path d="M419.5 388.6 H410.8 V411.2 H434.2 V402.5"/><path d="M420.5 401.5 L434.5 387.5"/><path d="M424.8 387.4 H435 V397.6"/></g>
<g transform="translate(0.0 87.4)" fill="none" stroke="#214a8c" stroke-width="3.5"><path d="M419.5 388.6 H410.8 V411.2 H434.2 V402.5"/><path d="M420.5 401.5 L434.5 387.5"/><path d="M424.8 387.4 H435 V397.6"/></g>
<g transform="translate(0.0 174.6)" fill="none" stroke="#000" stroke-width="3.5"><path d="M419.5 388.6 H410.8 V411.2 H434.2 V402.5"/><path d="M420.5 401.5 L434.5 387.5"/><path d="M424.8 387.4 H435 V397.6"/></g>
<g transform="translate(0.0 261.6)" fill="none" stroke="#000" stroke-width="3.5"><path d="M419.5 388.6 H410.8 V411.2 H434.2 V402.5"/><path d="M420.5 401.5 L434.5 387.5"/><path d="M424.8 387.4 H435 V397.6"/></g>
<g transform="translate(0.0 347.8)" fill="none" stroke="#000" stroke-width="3.5"><path d="M419.5 388.6 H410.8 V411.2 H434.2 V402.5"/><path d="M420.5 401.5 L434.5 387.5"/><path d="M424.8 387.4 H435 V397.6"/></g>
<g transform="translate(0.0 435.2)" fill="none" stroke="#000" stroke-width="3.5"><path d="M419.5 388.6 H410.8 V411.2 H434.2 V402.5"/><path d="M420.5 401.5 L434.5 387.5"/><path d="M424.8 387.4 H435 V397.6"/></g>
<g fill="none" stroke="#000" stroke-width="2.3"><rect x="40.2" y="1510.9" width="29.4" height="28.6"/><path d="M46.4 1519.6 H52 M53.7 1515.3 V1524.4 M55.8 1519.6 H64 M46.4 1530.6 H55.4 M57.8 1526 V1534.8 M60.6 1530.6 H64" stroke-width="2"/></g>
<path d="M419.6 1511.4 L434.4 1525.5 L419.6 1539.6" fill="none" stroke="#000" stroke-width="2.4"/>
<path d="M43.4 1615.8 L52 1624 L67.2 1607.2" fill="none" stroke="#000" stroke-width="2.4"/>
<path d="M416.4 1602 L431 1616 L416.4 1630" fill="none" stroke="#000" stroke-width="2.4"/>
<g fill="none" stroke="#404040" stroke-width="1.5"><circle cx="524.8" cy="267.7" r="11.4"/><path d="M518.2 267.7 H531.4 M524.8 261.1 V274.3"/></g>
<path d="M608.6 264 h15.6 l-7.8 7.9 Z" fill="#404040"/>
<path d="M694.81 257.86 L695.17 254.74 L698.83 254.74 L699.19 257.86 L701.91 258.99 L704.38 257.03 L706.97 259.62 L705.01 262.09 L706.14 264.81 L709.26 265.17 L709.26 268.83 L706.14 269.19 L705.01 271.91 L706.97 274.38 L704.38 276.97 L701.91 275.01 L699.19 276.14 L698.83 279.26 L695.17 279.26 L694.81 276.14 L692.09 275.01 L689.62 276.97 L687.03 274.38 L688.99 271.91 L687.86 269.19 L684.74 268.83 L684.74 265.17 L687.86 264.81 L688.99 262.09 L687.03 259.62 L689.62 257.03 L692.09 258.99 Z" fill="none" stroke="#404040" stroke-width="1.4" stroke-linejoin="round"/><circle cx="697" cy="267" r="4.6" fill="none" stroke="#404040" stroke-width="1.4"/>
<path d="M828.3 264 h15.6 l-7.8 7.9 Z" fill="#404040"/>
<g fill="none" stroke="#404040" stroke-width="1.6"><path d="M906.6 267 A10.8 10.8 0 0 1 926 259.6"/><path d="M926.8 254.4 V261.4 H919.8"/><path d="M928 269 A10.8 10.8 0 0 1 908.6 276.4"/><path d="M907.6 281.6 V274.6 H914.6"/></g>
<g fill="none" stroke="#404040" stroke-width="1.6"><rect x="1104.5" y="254.8" width="22.7" height="25.8"/><rect x="1109.6" y="259.6" width="5.6" height="5.6"/><path d="M1118 260.2 H1123 M1118 264.8 H1123 M1108.8 270.4 H1123 M1108.8 275.2 H1123"/></g>
<path d="M1370.2 258.2 L1393.4 254.2 Q1395.6 253.9 1395.1 256 L1390.2 279 Q1389.4 281.6 1387.4 279.8 L1369.4 262 Q1367.6 259.2 1370.2 258.2 Z" fill="#404040"/><path d="M1388.9 262.6 A5 5 0 1 0 1388.9 268.8" fill="none" stroke="#f3f4f6" stroke-width="3.8"/>
<path d="M1633.2 275 L1645.4 262.6 A7 7 0 0 1 1652.6 255 L1649 259.4 L1650 262 L1652.6 263 L1656.8 259.4 A7 7 0 0 1 1649.4 266.8 L1637.2 279 Z" fill="none" stroke="#404040" stroke-width="1.6" stroke-linejoin="round"/>
<path d="M1908.8 264 h15.6 l-7.8 7.9 Z" fill="#404040"/>
<path d="M2445.63 260.31 L2445.92 257.81 L2448.88 257.81 L2449.17 260.31 L2451.37 261.22 L2453.35 259.66 L2455.44 261.75 L2453.88 263.73 L2454.79 265.93 L2457.29 266.22 L2457.29 269.18 L2454.79 269.47 L2453.88 271.67 L2455.44 273.65 L2453.35 275.74 L2451.37 274.18 L2449.17 275.09 L2448.88 277.59 L2445.92 277.59 L2445.63 275.09 L2443.43 274.18 L2441.45 275.74 L2439.36 273.65 L2440.92 271.67 L2440.01 269.47 L2437.51 269.18 L2437.51 266.22 L2440.01 265.93 L2440.92 263.73 L2439.36 261.75 L2441.45 259.66 L2443.43 261.22 Z" fill="none" stroke="#333" stroke-width="1.2" stroke-linejoin="round"/><circle cx="2447.4" cy="267.7" r="3.7" fill="none" stroke="#333" stroke-width="1.2"/>
<rect x="500.1" y="331" width="25.6" height="25.6" fill="#fff" stroke="#333" stroke-width="2"/><path d="M504.6 347.2 L509.3 351.8 L523.2 337" fill="none" stroke="#444" stroke-width="2"/>
<g fill="none" stroke="#111" stroke-width="2"><rect x="1275.1" y="331" width="27.5" height="27.7" rx="2.5"/><path d="M1281.6 345 H1296.2 M1288.9 337.7 V352.3"/><path d="M1306 361.2 L1315.4 332.4"/><rect x="1321.4" y="331" width="27.5" height="27.7" rx="2.5"/><path d="M1327.6 345 H1342.6"/></g>
<rect x="499.25" y="397.25" width="25.5" height="25.5" fill="#fff" stroke="#000" stroke-width="2.3"/>
<path d="M757 409.5 h23.6" stroke="#333" stroke-width="1.7" fill="none"/>
<path d="M796.8 400.7 a2.4 2.4 0 0 1 2.4 -2.4 h6 l4.4 5.2 h9.6 a2.4 2.4 0 0 1 2.4 2.4 v10.6 a2.6 2.6 0 0 1 -2.6 2.6 h-19.6 a2.6 2.6 0 0 1 -2.6 -2.6 Z" fill="none" stroke="#222" stroke-width="1.8" stroke-linejoin="round"/>
<rect x="499.25" y="457.25" width="25.5" height="25.5" fill="#fff" stroke="#000" stroke-width="2.3"/>
<path d="M781 469.5 h23.6" stroke="#333" stroke-width="1.7" fill="none"/>
<path d="M820.8 460.7 a2.4 2.4 0 0 1 2.4 -2.4 h6 l4.4 5.2 h9.6 a2.4 2.4 0 0 1 2.4 2.4 v10.6 a2.6 2.6 0 0 1 -2.6 2.6 h-19.6 a2.6 2.6 0 0 1 -2.6 -2.6 Z" fill="none" stroke="#222" stroke-width="1.8" stroke-linejoin="round"/>
<rect x="499.25" y="517.25" width="25.5" height="25.5" fill="#fff" stroke="#000" stroke-width="2.3"/>
<g fill="none" stroke="#222" stroke-width="2" stroke-linejoin="round" stroke-linecap="round"><path d="M578.6 548.0 L581.2 539.6 L600.5 520.6 Q601.5 519.7 602.5 520.6 L606.4 524.6 Q607.3 525.6 606.4 526.6 L587.4 545.6 Z"/><path d="M581.2 539.6 L587.4 545.6"/><path d="M597.0 524.1 L603.0 530.1"/><path d="M634 533.9 C639 526.4 643.5 523.1999999999999 649 523.1999999999999 S659 526.4 664 533.9 C659 541.4 654.5 544.6 649 544.6 S639 541.4 634 533.9 Z"/><circle cx="649" cy="533.9" r="4.9"/><path d="M707.7 519.2 H692.2 V548.5 H717.8 V529.3 Z" stroke-linejoin="miter"/><path d="M707.7 519.2 V529.3 H717.8" stroke-linejoin="miter"/><path d="M697.2 539.8 L702 544.2 L711 533.6" stroke-linejoin="miter" stroke-linecap="butt"/></g>
<g><path d="M846.6 511.6 a1 1 0 0 1 1 -1 h11.5 l7.3 7.3 v16 a1 1 0 0 1 -1 1 h-17.8 a1 1 0 0 1 -1 -1 Z" fill="url(#cg)" stroke="#a9b5cf" stroke-width="1.2"/><path d="M859.1 510.6 v7.3 h7.3 Z" fill="#dfe8f6" stroke="#a9b5cf" stroke-width="1.1" stroke-linejoin="round"/><text x="856.6" y="526.8" font-family="Liberation Sans" font-weight="bold" font-size="9.8" fill="#ea9233" text-anchor="middle">CE</text></g>
<rect x="499.25" y="577.25" width="25.5" height="25.5" fill="#fff" stroke="#000" stroke-width="2.3"/>
<g fill="none" stroke="#222" stroke-width="2" stroke-linejoin="round" stroke-linecap="round"><path d="M578.6 608.0 L581.2 599.6 L600.5 580.6 Q601.5 579.7 602.5 580.6 L606.4 584.6 Q607.3 585.6 606.4 586.6 L587.4 605.6 Z"/><path d="M581.2 599.6 L587.4 605.6"/><path d="M597.0 584.1 L603.0 590.1"/><path d="M634 593.9 C639 586.4 643.5 583.1999999999999 649 583.1999999999999 S659 586.4 664 593.9 C659 601.4 654.5 604.6 649 604.6 S639 601.4 634 593.9 Z"/><circle cx="649" cy="593.9" r="4.9"/><path d="M707.7 579.2 H692.2 V608.5 H717.8 V589.3 Z" stroke-linejoin="miter"/><path d="M707.7 579.2 V589.3 H717.8" stroke-linejoin="miter"/><path d="M697.2 599.8 L702 604.2 L711 593.6" stroke-linejoin="miter" stroke-linecap="butt"/></g>
<g><path d="M846.6 571.6 a1 1 0 0 1 1 -1 h11.5 l7.3 7.3 v16 a1 1 0 0 1 -1 1 h-17.8 a1 1 0 0 1 -1 -1 Z" fill="url(#cg)" stroke="#a9b5cf" stroke-width="1.2"/><path d="M859.1 570.6 v7.3 h7.3 Z" fill="#dfe8f6" stroke="#a9b5cf" stroke-width="1.1" stroke-linejoin="round"/><text x="856.6" y="586.8" font-family="Liberation Sans" font-weight="bold" font-size="9.8" fill="#ea9233" text-anchor="middle">CE</text></g>
<rect x="499.25" y="637.25" width="25.5" height="25.5" fill="#fff" stroke="#000" stroke-width="2.3"/>
<g fill="none" stroke="#222" stroke-width="2" stroke-linejoin="round" stroke-linecap="round"><path d="M578.6 668.0 L581.2 659.6 L600.5 640.6 Q601.5 639.7 602.5 640.6 L606.4 644.6 Q607.3 645.6 606.4 646.6 L587.4 665.6 Z"/><path d="M581.2 659.6 L587.4 665.6"/><path d="M597.0 644.1 L603.0 650.1"/><path d="M634 653.9 C639 646.4 643.5 643.1999999999999 649 643.1999999999999 S659 646.4 664 653.9 C659 661.4 654.5 664.6 649 664.6 S639 661.4 634 653.9 Z"/><circle cx="649" cy="653.9" r="4.9"/><path d="M707.7 639.2 H692.2 V668.5 H717.8 V649.3 Z" stroke-linejoin="miter"/><path d="M707.7 639.2 V649.3 H717.8" stroke-linejoin="miter"/><path d="M697.2 659.8 L702 664.2 L711 653.6" stroke-linejoin="miter" stroke-linecap="butt"/></g>
<g><path d="M846.6 631.6 a1 1 0 0 1 1 -1 h11.5 l7.3 7.3 v16 a1 1 0 0 1 -1 1 h-17.8 a1 1 0 0 1 -1 -1 Z" fill="url(#cg)" stroke="#a9b5cf" stroke-width="1.2"/><path d="M859.1 630.6 v7.3 h7.3 Z" fill="#dfe8f6" stroke="#a9b5cf" stroke-width="1.1" stroke-linejoin="round"/><text x="856.6" y="646.8" font-family="Liberation Sans" font-weight="bold" font-size="9.8" fill="#ea9233" text-anchor="middle">CE</text></g>
<rect x="499.25" y="697.25" width="25.5" height="25.5" fill="#fff" stroke="#000" stroke-width="2.3"/>
<g fill="none" stroke="#222" stroke-width="2" stroke-linejoin="round" stroke-linecap="round"><path d="M578.6 728.0 L581.2 719.6 L600.5 700.6 Q601.5 699.7 602.5 700.6 L606.4 704.6 Q607.3 705.6 606.4 706.6 L587.4 725.6 Z"/><path d="M581.2 719.6 L587.4 725.6"/><path d="M597.0 704.1 L603.0 710.1"/><path d="M634 713.9 C639 706.4 643.5 703.1999999999999 649 703.1999999999999 S659 706.4 664 713.9 C659 721.4 654.5 724.6 649 724.6 S639 721.4 634 713.9 Z"/><circle cx="649" cy="713.9" r="4.9"/><path d="M707.7 699.2 H692.2 V728.5 H717.8 V709.3 Z" stroke-linejoin="miter"/><path d="M707.7 699.2 V709.3 H717.8" stroke-linejoin="miter"/><path d="M697.2 719.8 L702 724.2 L711 713.6" stroke-linejoin="miter" stroke-linecap="butt"/></g>
<g><path d="M846.6 691.6 a1 1 0 0 1 1 -1 h11.5 l7.3 7.3 v16 a1 1 0 0 1 -1 1 h-17.8 a1 1 0 0 1 -1 -1 Z" fill="url(#cg)" stroke="#a9b5cf" stroke-width="1.2"/><path d="M859.1 690.6 v7.3 h7.3 Z" fill="#dfe8f6" stroke="#a9b5cf" stroke-width="1.1" stroke-linejoin="round"/><text x="856.6" y="706.8" font-family="Liberation Sans" font-weight="bold" font-size="9.8" fill="#ea9233" text-anchor="middle">CE</text></g>
<rect x="499.25" y="757.25" width="25.5" height="25.5" fill="#fff" stroke="#000" stroke-width="2.3"/><path d="M502.3 769.8 L509.4 777.5 L522.6 762.3" fill="none" stroke="#222" stroke-width="2.1"/>
<g fill="none" stroke="#222" stroke-width="2" stroke-linejoin="round" stroke-linecap="round"><path d="M578.6 788.0 L581.2 779.6 L600.5 760.6 Q601.5 759.7 602.5 760.6 L606.4 764.6 Q607.3 765.6 606.4 766.6 L587.4 785.6 Z"/><path d="M581.2 779.6 L587.4 785.6"/><path d="M597.0 764.1 L603.0 770.1"/><path d="M634 773.9 C639 766.4 643.5 763.1999999999999 649 763.1999999999999 S659 766.4 664 773.9 C659 781.4 654.5 784.6 649 784.6 S639 781.4 634 773.9 Z"/><circle cx="649" cy="773.9" r="4.9"/><path d="M707.7 759.2 H692.2 V788.5 H717.8 V769.3 Z" stroke-linejoin="miter"/><path d="M707.7 759.2 V769.3 H717.8" stroke-linejoin="miter"/><path d="M697.2 779.8 L702 784.2 L711 773.6" stroke-linejoin="miter" stroke-linecap="butt"/></g>
<g><path d="M846.6 751.6 a1 1 0 0 1 1 -1 h11.5 l7.3 7.3 v16 a1 1 0 0 1 -1 1 h-17.8 a1 1 0 0 1 -1 -1 Z" fill="url(#cg)" stroke="#a9b5cf" stroke-width="1.2"/><path d="M859.1 750.6 v7.3 h7.3 Z" fill="#dfe8f6" stroke="#a9b5cf" stroke-width="1.1" stroke-linejoin="round"/><text x="856.6" y="766.8" font-family="Liberation Sans" font-weight="bold" font-size="9.8" fill="#ea9233" text-anchor="middle">CE</text></g>
<rect x="499.25" y="817.25" width="25.5" height="25.5" fill="#fff" stroke="#000" stroke-width="2.3"/>
<g fill="none" stroke="#222" stroke-width="2" stroke-linejoin="round" stroke-linecap="round"><path d="M578.6 848.0 L581.2 839.6 L600.5 820.6 Q601.5 819.7 602.5 820.6 L606.4 824.6 Q607.3 825.6 606.4 826.6 L587.4 845.6 Z"/><path d="M581.2 839.6 L587.4 845.6"/><path d="M597.0 824.1 L603.0 830.1"/><path d="M634 833.9 C639 826.4 643.5 823.1999999999999 649 823.1999999999999 S659 826.4 664 833.9 C659 841.4 654.5 844.6 649 844.6 S639 841.4 634 833.9 Z"/><circle cx="649" cy="833.9" r="4.9"/><path d="M707.7 819.2 H692.2 V848.5 H717.8 V829.3 Z" stroke-linejoin="miter"/><path d="M707.7 819.2 V829.3 H717.8" stroke-linejoin="miter"/><path d="M697.2 839.8 L702 844.2 L711 833.6" stroke-linejoin="miter" stroke-linecap="butt"/></g>
<g><path d="M846.6 811.6 a1 1 0 0 1 1 -1 h11.5 l7.3 7.3 v16 a1 1 0 0 1 -1 1 h-17.8 a1 1 0 0 1 -1 -1 Z" fill="url(#cg)" stroke="#a9b5cf" stroke-width="1.2"/><path d="M859.1 810.6 v7.3 h7.3 Z" fill="#dfe8f6" stroke="#a9b5cf" stroke-width="1.1" stroke-linejoin="round"/><text x="856.6" y="826.8" font-family="Liberation Sans" font-weight="bold" font-size="9.8" fill="#ea9233" text-anchor="middle">CE</text></g>
<rect x="499.25" y="877.25" width="25.5" height="25.5" fill="#fff" stroke="#000" stroke-width="2.3"/>
<g fill="none" stroke="#222" stroke-width="2" stroke-linejoin="round" stroke-linecap="round"><path d="M578.6 908.0 L581.2 899.6 L600.5 880.6 Q601.5 879.7 602.5 880.6 L606.4 884.6 Q607.3 885.6 606.4 886.6 L587.4 905.6 Z"/><path d="M581.2 899.6 L587.4 905.6"/><path d="M597.0 884.1 L603.0 890.1"/><path d="M634 893.9 C639 886.4 643.5 883.1999999999999 649 883.1999999999999 S659 886.4 664 893.9 C659 901.4 654.5 904.6 649 904.6 S639 901.4 634 893.9 Z"/><circle cx="649" cy="893.9" r="4.9"/><path d="M707.7 879.2 H692.2 V908.5 H717.8 V889.3 Z" stroke-linejoin="miter"/><path d="M707.7 879.2 V889.3 H717.8" stroke-linejoin="miter"/><path d="M697.2 899.8 L702 904.2 L711 893.6" stroke-linejoin="miter" stroke-linecap="butt"/></g>
<g><path d="M846.6 871.6 a1 1 0 0 1 1 -1 h11.5 l7.3 7.3 v16 a1 1 0 0 1 -1 1 h-17.8 a1 1 0 0 1 -1 -1 Z" fill="url(#cg)" stroke="#a9b5cf" stroke-width="1.2"/><path d="M859.1 870.6 v7.3 h7.3 Z" fill="#dfe8f6" stroke="#a9b5cf" stroke-width="1.1" stroke-linejoin="round"/><text x="856.6" y="886.8" font-family="Liberation Sans" font-weight="bold" font-size="9.8" fill="#ea9233" text-anchor="middle">CE</text></g>
<rect x="499.25" y="937.25" width="25.5" height="25.5" fill="#fff" stroke="#000" stroke-width="2.3"/>
<g fill="none" stroke="#222" stroke-width="2" stroke-linejoin="round" stroke-linecap="round"><path d="M578.6 968.0 L581.2 959.6 L600.5 940.6 Q601.5 939.7 602.5 940.6 L606.4 944.6 Q607.3 945.6 606.4 946.6 L587.4 965.6 Z"/><path d="M581.2 959.6 L587.4 965.6"/><path d="M597.0 944.1 L603.0 950.1"/><path d="M634 953.9 C639 946.4 643.5 943.1999999999999 649 943.1999999999999 S659 946.4 664 953.9 C659 961.4 654.5 964.6 649 964.6 S639 961.4 634 953.9 Z"/><circle cx="649" cy="953.9" r="4.9"/><path d="M707.7 939.2 H692.2 V968.5 H717.8 V949.3 Z" stroke-linejoin="miter"/><path d="M707.7 939.2 V949.3 H717.8" stroke-linejoin="miter"/><path d="M697.2 959.8 L702 964.2 L711 953.6" stroke-linejoin="miter" stroke-linecap="butt"/></g>
<g><path d="M846.6 931.6 a1 1 0 0 1 1 -1 h11.5 l7.3 7.3 v16 a1 1 0 0 1 -1 1 h-17.8 a1 1 0 0 1 -1 -1 Z" fill="url(#cg)" stroke="#a9b5cf" stroke-width="1.2"/><path d="M859.1 930.6 v7.3 h7.3 Z" fill="#dfe8f6" stroke="#a9b5cf" stroke-width="1.1" stroke-linejoin="round"/><text x="856.6" y="946.8" font-family="Liberation Sans" font-weight="bold" font-size="9.8" fill="#ea9233" text-anchor="middle">CE</text></g>
<rect x="499.25" y="997.25" width="25.5" height="25.5" fill="#fff" stroke="#000" stroke-width="2.3"/>
<g fill="none" stroke="#222" stroke-width="2" stroke-linejoin="round" stroke-linecap="round"><path d="M578.6 1028.0 L581.2 1019.6 L600.5 1000.6 Q601.5 999.7 602.5 1000.6 L606.4 1004.6 Q607.3 1005.6 606.4 1006.6 L587.4 1025.6 Z"/><path d="M581.2 1019.6 L587.4 1025.6"/><path d="M597.0 1004.1 L603.0 1010.1"/><path d="M634 1013.9 C639 1006.4 643.5 1003.1999999999999 649 1003.1999999999999 S659 1006.4 664 1013.9 C659 1021.4 654.5 1024.6 649 1024.6 S639 1021.4 634 1013.9 Z"/><circle cx="649" cy="1013.9" r="4.9"/><path d="M707.7 999.2 H692.2 V1028.5 H717.8 V1009.3 Z" stroke-linejoin="miter"/><path d="M707.7 999.2 V1009.3 H717.8" stroke-linejoin="miter"/><path d="M697.2 1019.8 L702 1024.2 L711 1013.6" stroke-linejoin="miter" stroke-linecap="butt"/></g>
<g><path d="M846.6 991.6 a1 1 0 0 1 1 -1 h11.5 l7.3 7.3 v16 a1 1 0 0 1 -1 1 h-17.8 a1 1 0 0 1 -1 -1 Z" fill="url(#cg)" stroke="#a9b5cf" stroke-width="1.2"/><path d="M859.1 990.6 v7.3 h7.3 Z" fill="#dfe8f6" stroke="#a9b5cf" stroke-width="1.1" stroke-linejoin="round"/><text x="856.6" y="1006.8" font-family="Liberation Sans" font-weight="bold" font-size="9.8" fill="#ea9233" text-anchor="middle">CE</text></g>
<rect x="499.25" y="1057.25" width="25.5" height="25.5" fill="#fff" stroke="#000" stroke-width="2.3"/>
<g fill="none" stroke="#222" stroke-width="2" stroke-linejoin="round" stroke-linecap="round"><path d="M578.6 1088.0 L581.2 1079.6 L600.5 1060.6 Q601.5 1059.7 602.5 1060.6 L606.4 1064.6 Q607.3 1065.6 606.4 1066.6 L587.4 1085.6 Z"/><path d="M581.2 1079.6 L587.4 1085.6"/><path d="M597.0 1064.1 L603.0 1070.1"/><path d="M634 1073.9 C639 1066.4 643.5 1063.2 649 1063.2 S659 1066.4 664 1073.9 C659 1081.4 654.5 1084.6000000000001 649 1084.6000000000001 S639 1081.4 634 1073.9 Z"/><circle cx="649" cy="1073.9" r="4.9"/><path d="M707.7 1059.2 H692.2 V1088.5 H717.8 V1069.3 Z" stroke-linejoin="miter"/><path d="M707.7 1059.2 V1069.3 H717.8" stroke-linejoin="miter"/><path d="M697.2 1079.8 L702 1084.2 L711 1073.6" stroke-linejoin="miter" stroke-linecap="butt"/></g>
<g><path d="M846.6 1051.6 a1 1 0 0 1 1 -1 h11.5 l7.3 7.3 v16 a1 1 0 0 1 -1 1 h-17.8 a1 1 0 0 1 -1 -1 Z" fill="url(#cg)" stroke="#a9b5cf" stroke-width="1.2"/><path d="M859.1 1050.6 v7.3 h7.3 Z" fill="#dfe8f6" stroke="#a9b5cf" stroke-width="1.1" stroke-linejoin="round"/><text x="856.6" y="1066.8" font-family="Liberation Sans" font-weight="bold" font-size="9.8" fill="#ea9233" text-anchor="middle">CE</text></g>
<rect x="499.25" y="1117.25" width="25.5" height="25.5" fill="#fff" stroke="#000" stroke-width="2.3"/>
<g fill="none" stroke="#222" stroke-width="2" stroke-linejoin="round" stroke-linecap="round"><path d="M578.6 1148.0 L581.2 1139.6 L600.5 1120.6 Q601.5 1119.7 602.5 1120.6 L606.4 1124.6 Q607.3 1125.6 606.4 1126.6 L587.4 1145.6 Z"/><path d="M581.2 1139.6 L587.4 1145.6"/><path d="M597.0 1124.1 L603.0 1130.1"/><path d="M634 1133.9 C639 1126.4 643.5 1123.2 649 1123.2 S659 1126.4 664 1133.9 C659 1141.4 654.5 1144.6000000000001 649 1144.6000000000001 S639 1141.4 634 1133.9 Z"/><circle cx="649" cy="1133.9" r="4.9"/><path d="M707.7 1119.2 H692.2 V1148.5 H717.8 V1129.3 Z" stroke-linejoin="miter"/><path d="M707.7 1119.2 V1129.3 H717.8" stroke-linejoin="miter"/><path d="M697.2 1139.8 L702 1144.2 L711 1133.6" stroke-linejoin="miter" stroke-linecap="butt"/></g>
<g><path d="M846.6 1111.6 a1 1 0 0 1 1 -1 h11.5 l7.3 7.3 v16 a1 1 0 0 1 -1 1 h-17.8 a1 1 0 0 1 -1 -1 Z" fill="url(#cg)" stroke="#a9b5cf" stroke-width="1.2"/><path d="M859.1 1110.6 v7.3 h7.3 Z" fill="#dfe8f6" stroke="#a9b5cf" stroke-width="1.1" stroke-linejoin="round"/><text x="856.6" y="1126.8" font-family="Liberation Sans" font-weight="bold" font-size="9.8" fill="#ea9233" text-anchor="middle">CE</text></g>
<rect x="499.25" y="1177.25" width="25.5" height="25.5" fill="#fff" stroke="#000" stroke-width="2.3"/>
<g fill="none" stroke="#222" stroke-width="2" stroke-linejoin="round" stroke-linecap="round"><path d="M578.6 1208.0 L581.2 1199.6 L600.5 1180.6 Q601.5 1179.7 602.5 1180.6 L606.4 1184.6 Q607.3 1185.6 606.4 1186.6 L587.4 1205.6 Z"/><path d="M581.2 1199.6 L587.4 1205.6"/><path d="M597.0 1184.1 L603.0 1190.1"/><path d="M634 1193.9 C639 1186.4 643.5 1183.2 649 1183.2 S659 1186.4 664 1193.9 C659 1201.4 654.5 1204.6000000000001 649 1204.6000000000001 S639 1201.4 634 1193.9 Z"/><circle cx="649" cy="1193.9" r="4.9"/><path d="M707.7 1179.2 H692.2 V1208.5 H717.8 V1189.3 Z" stroke-linejoin="miter"/><path d="M707.7 1179.2 V1189.3 H717.8" stroke-linejoin="miter"/><path d="M697.2 1199.8 L702 1204.2 L711 1193.6" stroke-linejoin="miter" stroke-linecap="butt"/></g>
<g><path d="M846.6 1171.6 a1 1 0 0 1 1 -1 h11.5 l7.3 7.3 v16 a1 1 0 0 1 -1 1 h-17.8 a1 1 0 0 1 -1 -1 Z" fill="url(#cg)" stroke="#a9b5cf" stroke-width="1.2"/><path d="M859.1 1170.6 v7.3 h7.3 Z" fill="#dfe8f6" stroke="#a9b5cf" stroke-width="1.1" stroke-linejoin="round"/><text x="856.6" y="1186.8" font-family="Liberation Sans" font-weight="bold" font-size="9.8" fill="#ea9233" text-anchor="middle">CE</text></g>
<rect x="499.25" y="1237.25" width="25.5" height="25.5" fill="#fff" stroke="#000" stroke-width="2.3"/>
<g fill="none" stroke="#222" stroke-width="2" stroke-linejoin="round" stroke-linecap="round"><path d="M578.6 1268.0 L581.2 1259.6 L600.5 1240.6 Q601.5 1239.7 602.5 1240.6 L606.4 1244.6 Q607.3 1245.6 606.4 1246.6 L587.4 1265.6 Z"/><path d="M581.2 1259.6 L587.4 1265.6"/><path d="M597.0 1244.1 L603.0 1250.1"/><path d="M634 1253.9 C639 1246.4 643.5 1243.2 649 1243.2 S659 1246.4 664 1253.9 C659 1261.4 654.5 1264.6000000000001 649 1264.6000000000001 S639 1261.4 634 1253.9 Z"/><circle cx="649" cy="1253.9" r="4.9"/><path d="M707.7 1239.2 H692.2 V1268.5 H717.8 V1249.3 Z" stroke-linejoin="miter"/><path d="M707.7 1239.2 V1249.3 H717.8" stroke-linejoin="miter"/><path d="M697.2 1259.8 L702 1264.2 L711 1253.6" stroke-linejoin="miter" stroke-linecap="butt"/></g>
<g><path d="M846.6 1231.6 a1 1 0 0 1 1 -1 h11.5 l7.3 7.3 v16 a1 1 0 0 1 -1 1 h-17.8 a1 1 0 0 1 -1 -1 Z" fill="url(#cg)" stroke="#a9b5cf" stroke-width="1.2"/><path d="M859.1 1230.6 v7.3 h7.3 Z" fill="#dfe8f6" stroke="#a9b5cf" stroke-width="1.1" stroke-linejoin="round"/><text x="856.6" y="1246.8" font-family="Liberation Sans" font-weight="bold" font-size="9.8" fill="#ea9233" text-anchor="middle">CE</text></g>
<rect x="499.25" y="1297.25" width="25.5" height="25.5" fill="#fff" stroke="#000" stroke-width="2.3"/>
<path d="M781 1309.5 h23.6" stroke="#333" stroke-width="1.7" fill="none"/>
<path d="M820.8 1300.7 a2.4 2.4 0 0 1 2.4 -2.4 h6 l4.4 5.2 h9.6 a2.4 2.4 0 0 1 2.4 2.4 v10.6 a2.6 2.6 0 0 1 -2.6 2.6 h-19.6 a2.6 2.6 0 0 1 -2.6 -2.6 Z" fill="none" stroke="#222" stroke-width="1.8" stroke-linejoin="round"/>
<rect x="499.25" y="1357.25" width="25.5" height="25.5" fill="#fff" stroke="#000" stroke-width="2.3"/>
<g fill="none" stroke="#222" stroke-width="2" stroke-linejoin="round" stroke-linecap="round"><path d="M578.6 1388.0 L581.2 1379.6 L600.5 1360.6 Q601.5 1359.7 602.5 1360.6 L606.4 1364.6 Q607.3 1365.6 606.4 1366.6 L587.4 1385.6 Z"/><path d="M581.2 1379.6 L587.4 1385.6"/><path d="M597.0 1364.1 L603.0 1370.1"/><path d="M634 1373.9 C639 1366.4 643.5 1363.2 649 1363.2 S659 1366.4 664 1373.9 C659 1381.4 654.5 1384.6000000000001 649 1384.6000000000001 S639 1381.4 634 1373.9 Z"/><circle cx="649" cy="1373.9" r="4.9"/><path d="M707.7 1359.2 H692.2 V1388.5 H717.8 V1369.3 Z" stroke-linejoin="miter"/><path d="M707.7 1359.2 V1369.3 H717.8" stroke-linejoin="miter"/><path d="M697.2 1379.8 L702 1384.2 L711 1373.6" stroke-linejoin="miter" stroke-linecap="butt"/></g>
<g><path d="M846.6 1351.6 a1 1 0 0 1 1 -1 h11.5 l7.3 7.3 v16 a1 1 0 0 1 -1 1 h-17.8 a1 1 0 0 1 -1 -1 Z" fill="url(#cg)" stroke="#a9b5cf" stroke-width="1.2"/><path d="M859.1 1350.6 v7.3 h7.3 Z" fill="#dfe8f6" stroke="#a9b5cf" stroke-width="1.1" stroke-linejoin="round"/><text x="856.6" y="1366.8" font-family="Liberation Sans" font-weight="bold" font-size="9.8" fill="#ea9233" text-anchor="middle">CE</text></g>
<rect x="499.25" y="1417.25" width="25.5" height="25.5" fill="#fff" stroke="#000" stroke-width="2.3"/>
<g fill="none" stroke="#222" stroke-width="2" stroke-linejoin="round" stroke-linecap="round"><path d="M578.6 1448.0 L581.2 1439.6 L600.5 1420.6 Q601.5 1419.7 602.5 1420.6 L606.4 1424.6 Q607.3 1425.6 606.4 1426.6 L587.4 1445.6 Z"/><path d="M581.2 1439.6 L587.4 1445.6"/><path d="M597.0 1424.1 L603.0 1430.1"/><path d="M634 1433.9 C639 1426.4 643.5 1423.2 649 1423.2 S659 1426.4 664 1433.9 C659 1441.4 654.5 1444.6000000000001 649 1444.6000000000001 S639 1441.4 634 1433.9 Z"/><circle cx="649" cy="1433.9" r="4.9"/><path d="M707.7 1419.2 H692.2 V1448.5 H717.8 V1429.3 Z" stroke-linejoin="miter"/><path d="M707.7 1419.2 V1429.3 H717.8" stroke-linejoin="miter"/><path d="M697.2 1439.8 L702 1444.2 L711 1433.6" stroke-linejoin="miter" stroke-linecap="butt"/></g>
<g><path d="M846.6 1411.6 a1 1 0 0 1 1 -1 h11.5 l7.3 7.3 v16 a1 1 0 0 1 -1 1 h-17.8 a1 1 0 0 1 -1 -1 Z" fill="url(#cg)" stroke="#a9b5cf" stroke-width="1.2"/><path d="M859.1 1410.6 v7.3 h7.3 Z" fill="#dfe8f6" stroke="#a9b5cf" stroke-width="1.1" stroke-linejoin="round"/><text x="856.6" y="1426.8" font-family="Liberation Sans" font-weight="bold" font-size="9.8" fill="#ea9233" text-anchor="middle">CE</text></g>
<rect x="499.25" y="1477.25" width="25.5" height="25.5" fill="#fff" stroke="#000" stroke-width="2.3"/>
<path d="M757 1489.8 h24 M769 1477.8 v24" stroke="#222" stroke-width="1.8" fill="none"/>
<path d="M796.8 1480.7 a2.4 2.4 0 0 1 2.4 -2.4 h6 l4.4 5.2 h9.6 a2.4 2.4 0 0 1 2.4 2.4 v10.6 a2.6 2.6 0 0 1 -2.6 2.6 h-19.6 a2.6 2.6 0 0 1 -2.6 -2.6 Z" fill="none" stroke="#222" stroke-width="1.8" stroke-linejoin="round"/>
<rect x="499.25" y="1537.25" width="25.5" height="25.5" fill="#fff" stroke="#000" stroke-width="2.3"/>
<path d="M757 1549.8 h24 M769 1537.8 v24" stroke="#222" stroke-width="1.8" fill="none"/>
<path d="M796.8 1540.7 a2.4 2.4 0 0 1 2.4 -2.4 h6 l4.4 5.2 h9.6 a2.4 2.4 0 0 1 2.4 2.4 v10.6 a2.6 2.6 0 0 1 -2.6 2.6 h-19.6 a2.6 2.6 0 0 1 -2.6 -2.6 Z" fill="none" stroke="#222" stroke-width="1.8" stroke-linejoin="round"/>
<rect x="499.25" y="1597.25" width="25.5" height="25.5" fill="#fff" stroke="#000" stroke-width="2.3"/>
<path d="M757 1609.8 h24 M769 1597.8 v24" stroke="#222" stroke-width="1.8" fill="none"/>
<path d="M796.8 1600.7 a2.4 2.4 0 0 1 2.4 -2.4 h6 l4.4 5.2 h9.6 a2.4 2.4 0 0 1 2.4 2.4 v10.6 a2.6 2.6 0 0 1 -2.6 2.6 h-19.6 a2.6 2.6 0 0 1 -2.6 -2.6 Z" fill="none" stroke="#222" stroke-width="1.8" stroke-linejoin="round"/>
<g fill="none" stroke="#333" stroke-width="1.3"><path d="M2758.6 827.6 V844 M2762.8 827.6 V844"/><path d="M2757 835.8 H2751.4 M2754.6 832.6 L2751.4 835.8 L2754.6 839"/><path d="M2764.4 835.8 H2770 M2766.8 832.6 L2770 835.8 L2766.8 839"/></g>
<path d="M2755.6 904.8 L2760.2 909.2 L2755.6 913.6 Z M2760.6 904.8 L2765.2 909.2 L2760.6 913.6 Z" fill="#333"/>
<path d="M2757 978 L2763.8 983.5 L2757 989 Z" fill="#999"/>
<path d="M2764.4 1051.8 L2757.5 1057.4 L2764.4 1063 Z" fill="#333"/>
<rect x="0" y="1627" width="479" height="62" fill="#fff"/>
<path d="M480.5 226 V1631.5 a7 7 0 0 0 7 7 H2733.4 a7 7 0 0 0 7 -7 V226" fill="none" stroke="#ababab" stroke-width="2.2"/>
<path d="M2765.6 1647.4 A31.5 31.5 0 0 1 2733.8 1678.6" fill="none" stroke="#000" stroke-width="5.2" stroke-linecap="round"/>
</svg>
<div class="bx" style="left:0;top:1689px;width:2777px;height:1px;background:#e8e8e8"></div>
</body></html>
